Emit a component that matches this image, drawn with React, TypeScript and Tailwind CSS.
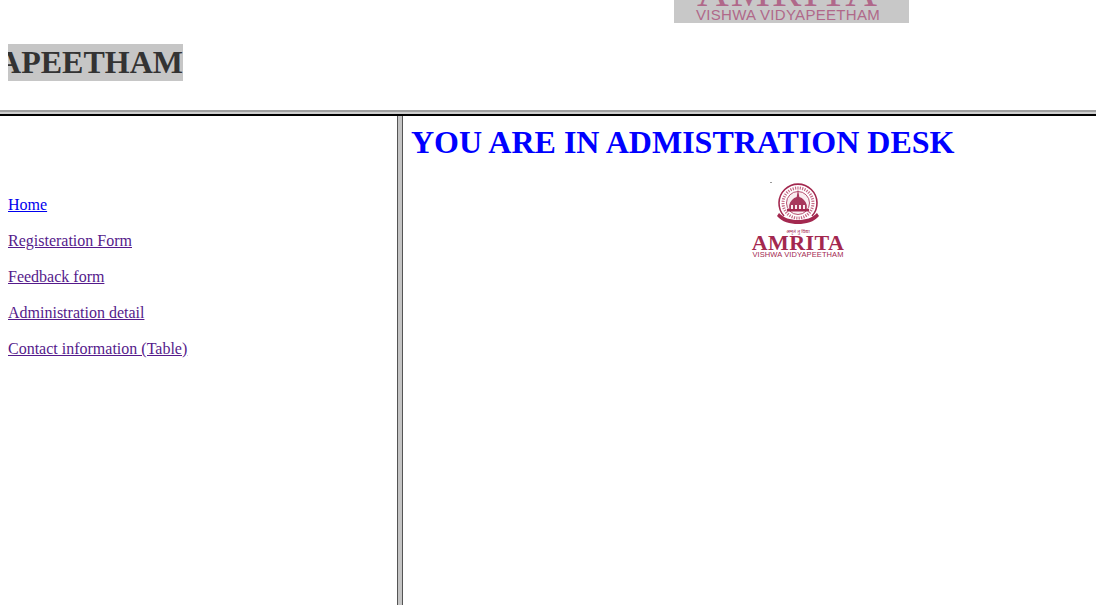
import React from 'react';

const serif = { fontFamily: '"Liberation Serif", "Times New Roman", serif' };
const sans = { fontFamily: '"Liberation Sans", Arial, sans-serif' };

const links = [
  { label: 'Home', color: 'text-[#0000ee]' },
  { label: 'Registeration Form', color: 'text-[#551a8b]' },
  { label: 'Feedback form', color: 'text-[#551a8b]' },
  { label: 'Administration detail', color: 'text-[#551a8b]' },
  { label: 'Contact information (Table)', color: 'text-[#551a8b]' },
];

const Emblem: React.FC = () => (
  <svg width="44" height="46" viewBox="0 0 44 46" fill="none" className="overflow-visible">
    <rect x="-6" y="-1" width="2" height="1" fill="#999999" />
    <path d="M8 33A19 19 0 1 1 36 33" stroke="#a3284f" strokeWidth="1.6" />
    <circle cx="22" cy="20" r="15" stroke="#c56a86" strokeWidth="3" strokeDasharray="1.2 1.2" />
    <circle cx="22" cy="20" r="11.5" fill="#f9edf0" stroke="#a3284f" strokeWidth="0.8" />
    <path d="M22 6l1.300 8c3.500 1 6.500 4 7.500 8v4H13.200v-4c1-4 4-7 7.500-8z" fill="#a8385c" />
    <path d="M11 26h22v2.500H11z" fill="#a3284f" />
    <path d="M15 22h2v4h-2zM19 22h2v4h-2zM23 22h2v4h-2zM27 22h2v4h-2z" fill="#f9edf0" />
    <path d="M3 30c5 5 11 7 19 7s14-2 19-7l2 3c-5 6-13 8-21 8S6 39 1 33z" fill="#a3284f" />
  </svg>
);

export default function App() {
  return (
    <div className="h-[605px] w-[1096px] overflow-hidden bg-white text-black" style={serif}>
      <header className="h-[110px]">
        <div className="ml-[674px] flex h-[23px] w-[235px] flex-col items-center justify-end overflow-hidden bg-[#c8c8c8] pb-px pr-[7px] text-[#b0688a]">
          <div className="text-[44px] leading-[30px] tracking-[2px]">AMRITA</div>
          <div className="whitespace-nowrap text-[15px] leading-[15px] tracking-[0.3px]" style={sans}>
            VISHWA VIDYAPEETHAM
          </div>
        </div>
        <div className="ml-2 mt-[21px] flex h-[37px] w-[175px] justify-end overflow-hidden whitespace-nowrap bg-[#c6c6c6] text-[32px] font-bold leading-[37px] text-[#333333]">
          APEETHAM
        </div>
      </header>

      <div className="h-[6px] border-y-2 border-t-[#a0a0a0] border-b-black bg-[#cfcfcf]" />

      <div className="flex h-[489px]">
        <nav className="w-[397px] pl-2 pt-[80px]">
          {links.map(link => (
            <p key={link.label} className="mb-[18px] text-base leading-[18px]">
              <a href="#" className={`underline ${link.color}`}>{link.label}</a>
            </p>
          ))}
        </nav>

        <div className="w-[6px] border-x border-x-[#555555] bg-[#c4c4c4]" />

        <main className="flex-1 pl-2 pt-[8px]">
          <h1 className="text-[32px] font-bold leading-[37px] text-[#0000ff]">YOU ARE IN ADMISTRATION DESK</h1>
          <div className="ml-[341px] mt-[22px] flex w-[92px] flex-col items-center text-[#a3284f]">
            <Emblem />
            <div className="text-[5px] leading-[5px]" style={{ fontFamily: '"Noto Sans", sans-serif' }}>अमृतं तु विद्या</div>
            <div className="whitespace-nowrap text-[22px] font-bold leading-[17px] tracking-[0.4px]">AMRITA</div>
            <div className="whitespace-nowrap text-[7.5px] leading-[8px] tracking-[0.1px]" style={sans}>VISHWA VIDYAPEETHAM</div>
          </div>
        </main>
      </div>
    </div>
  );
}
